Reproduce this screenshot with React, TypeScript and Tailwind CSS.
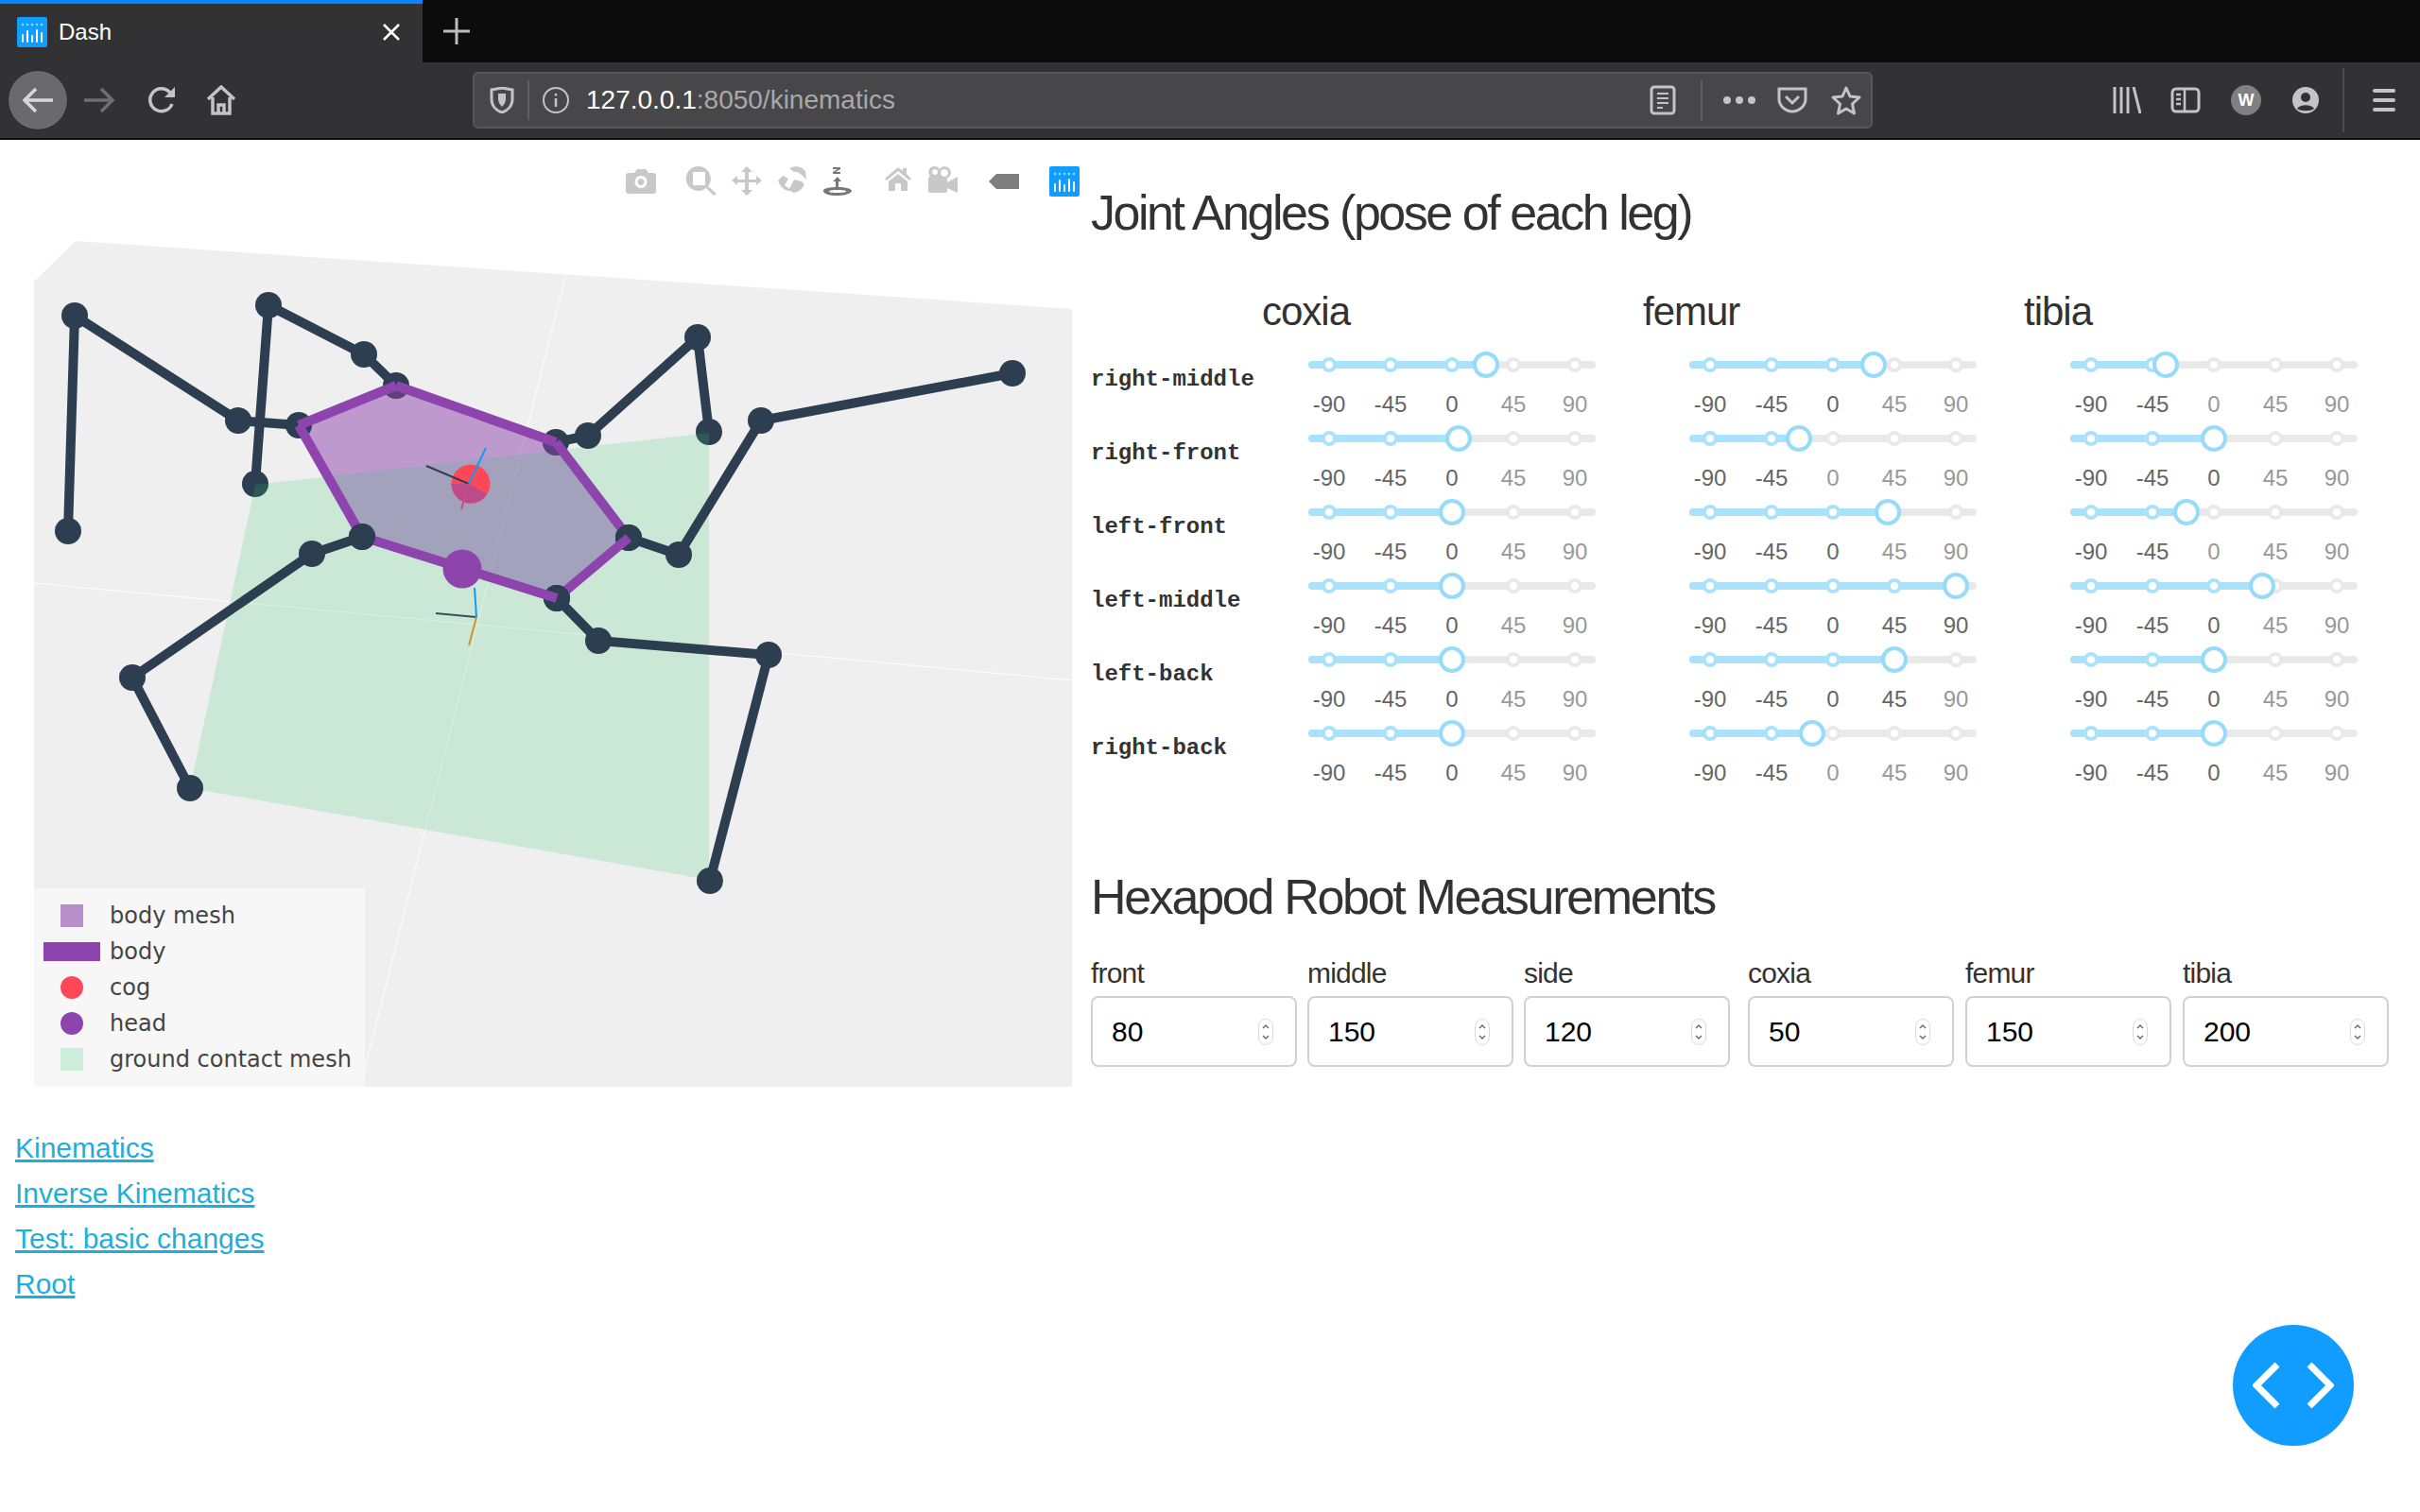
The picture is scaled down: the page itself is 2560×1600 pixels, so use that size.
import React from 'react';

const sans = { fontFamily: '"Liberation Sans", Arial, sans-serif' };

const rows = ['right-middle', 'right-front', 'left-front', 'left-middle', 'left-back', 'right-back'];
const angles = [
  [25, 30, -35],
  [5, -25, 0],
  [0, 40, -20],
  [0, 90, 35],
  [0, 45, 0],
  [0, -15, 0],
];
const marks = [-90, -45, 0, 45, 90];
const toX = (v: number) => 152 + (v * 65) / 45;

const Slider = ({ value }: { value: number }) => (
  <div className="relative w-[304px] h-[78px] shrink-0">
    <div className="absolute left-0 right-0 top-[15px] h-2 rounded-full bg-[#e9e9e9]" />
    <div className="absolute left-0 top-[15px] h-2 rounded-l-full bg-[#abe2fb]" style={{ width: toX(value) }} />
    {marks.map((m) => (
      <div
        key={m}
        className={`absolute top-[11px] w-4 h-4 -ml-2 rounded-full border-4 bg-white ${m <= value ? 'border-[#abe2fb]' : 'border-[#e9e9e9]'}`}
        style={{ left: toX(m) }}
      />
    ))}
    <div
      className="absolute top-[5px] w-[28px] h-[28px] -ml-[14px] rounded-full border-4 border-[#96dbfa] bg-white"
      style={{ left: toX(value) }}
    />
    {marks.map((m) => (
      <span
        key={m}
        className={`absolute top-[47px] w-[60px] -ml-[30px] text-center text-[24px] leading-[28px] ${m <= value ? 'text-[#666]' : 'text-[#999]'}`}
        style={{ left: toX(m) }}
      >
        {m}
      </span>
    ))}
  </div>
);

const NumberField = ({ label, value }: { label: string; value: number }) => (
  <div className="w-[218px]">
    <div className="text-[30px] leading-[40px] tracking-[-0.8px] text-[#333]">{label}</div>
    <div className="mt-1 flex items-center h-[75px] rounded-[8px] border-2 border-[#d1d1d1] bg-white pl-[20px] pr-[23px]">
      <span className="flex-1 text-[30px] text-black">{value}</span>
      <svg width="16" height="28" viewBox="0 0 16 28">
        <rect x="0.5" y="0.5" width="15" height="27" rx="7.5" fill="#fff" stroke="#dcdcdc" />
        <path d="M5 10l3-3 3 3M5 18l3 3 3-3" fill="none" stroke="#666" strokeWidth="1.3" />
      </svg>
    </div>
  </div>
);

// plotly / dash logo, also used as tab favicon
const DashLogo = ({ size }: { size: number }) => (
  <svg width={size} height={size} viewBox="0 0 32 32" className="shrink-0">
    <rect width="32" height="32" rx="2" fill="#119dff" />
    {[6, 11, 16, 21, 26].map((x) => (
      <circle key={x} cx={x} cy="8" r="1.3" fill="#7fe0ff" />
    ))}
    <path d="M6 19v7M11 15v11M16 20v6M21 14v12M26 17v9" stroke="#fff" strokeWidth="2" strokeLinecap="round" />
  </svg>
);

const Modebar = () => (
  <div className="absolute left-0 top-0 w-[1140px] h-[70px]">
    <svg width="1140" height="70" viewBox="0 148 1140 70">
      <g fill="#c8c8c8">
        <path fillRule="evenodd" d="M665 183h6l3-4h9l3 4h5a3 3 0 0 1 3 3v16a3 3 0 0 1-3 3h-26a3 3 0 0 1-3-3v-16a3 3 0 0 1 3-3zM678 186a6.5 6.5 0 1 0 .01 0zM678 189a3.5 3.5 0 1 1-.01 0z" />
        <path fillRule="evenodd" d="M739 176a13 13 0 0 1 10 21l9 8-3 2-8-8a13 13 0 1 1-8-23zM733 182v14h13v-14z" />
        <path d="M790 176l6 6h-4v8h8v-4l6 5-6 5v-3h-8v8h4l-6 6-6-6h4v-8h-8v3l-6-5 6-5v4h8v-8h-4z" />
        <path d="M835 178c6-3 13-2 17 3l1 9-5-5c-3-2-5-4-8-3zM823 191l5-5 6 3-4 7 8 6c-7 1-13-4-15-11zM840 190l8 2 3 3c-2 5-7 9-12 9l-4-4z" />
        <path d="M950 177l5 4v-3h4v6l5 5-2 2-12-10-12 10-2-2z" />
        <path d="M940 192l10-8 10 8v10h-7v-8h-6v8h-7z" />
        <path fillRule="evenodd" d="M989 176a6 6 0 0 1 5 3 6.500 6.500 0 1 1 4 10h4v4l11-6v17l-11-5v3a2 2 0 0 1-2 2h-16a2 2 0 0 1-2-2v-13a4 4 0 0 1 2-3 6 6 0 0 1 5-10zM989 179a3 3 0 1 0 .01 0zM999 179a4 4 0 1 0 .01 0z" />
      </g>
      <g fill="#777">
        <path d="M1046 192l8-8h24v16h-24z" fill="#7f7f7f" />
        <path d="M881 177h8v2l-5 3h5v2h-8v-2l5-3h-5z" />
        <path d="M886 187l4 5h-3v7h-3v-7h-3z" />
        <path fillRule="evenodd" d="M886 198c9 0 15 2 15 4s-6 5-15 5-15-2-15-5 6-4 15-4zM886 201c-5 0-9 .5-9 1.500s4 1.500 9 1.500 9-.5 9-1.500-4-1.500-9-1.500z" />
      </g>
    </svg>
    <div className="absolute left-[1110px] top-[28px]">
      <DashLogo size={32} />
    </div>
  </div>
);

const Node = ({ p }: { p: number[] }) => <circle cx={p[0]} cy={p[1]} r="14" fill="#2c3e50" />;

const legs = [
  [[316, 450], [252, 445], [79, 334], [72, 562]],
  [[419, 408], [385, 375], [284, 323], [270, 512]],
  [[383, 568], [330, 586], [140, 717], [201, 834]],
  [[588, 468], [622, 461], [738, 357], [750, 457]],
  [[665, 569], [718, 587], [805, 445], [1071, 395]],
  [[589, 633], [633, 678], [813, 693], [751, 932]],
];

const meshPoints = '316,450 419,408 588,468 665,569 589,633 383,568';
const groundPoints = '270,513 750,458 750,931 201,834';

const Plot = () => (
  <svg width="1140" height="1012" viewBox="0 148 1140 1012" className="block">
    <defs>
      <clipPath id="cog">
        <circle cx="498" cy="512" r="20.500" />
      </clipPath>
      <clipPath id="feet">
        <circle cx="270" cy="512" r="14" />
        <circle cx="750" cy="457" r="14" />
      </clipPath>
      <clipPath id="hips">
        <circle cx="419" cy="408" r="14" />
        <circle cx="588" cy="468" r="14" />
      </clipPath>
    </defs>
    <path d="M36 298L80 255 1134 327V1150H36z" fill="#efefef" />
    <path d="M599 290L381 1150M36 617L1134 720" stroke="#fff" strokeWidth="1" fill="none" />
    <polygon points={meshPoints} fill="#8e44ad" fillOpacity="0.5" />
    <polygon points={groundPoints} fill="#2ecc71" fillOpacity="0.19" />
    {legs.map((l, i) => (
      <g key={i}>
        <polyline points={l.map((p) => p.join(',')).join(' ')} fill="none" stroke="#2c3e50" strokeWidth="10" />
        {l.map((p, j) => (
          <Node key={j} p={p} />
        ))}
      </g>
    ))}
    {/* meshes tint the joints they pass over */}
    <polygon points={groundPoints} fill="#2ecc71" fillOpacity="0.19" clipPath="url(#feet)" />
    <polygon points={meshPoints} fill="#8e44ad" fillOpacity="0.5" clipPath="url(#hips)" />
    <circle cx="498" cy="512" r="20.500" fill="#ff4757" />
    <polygon points="496,512 530,531 530,550 470,550 470,512" fill="#bd4a8a" clipPath="url(#cog)" />
    <path d="M419 408L588 468" stroke="#8e44ad" strokeWidth="10" />
    <path d="M316 450L419 408" stroke="#8e44ad" strokeWidth="10" />
    <path d="M588 468L665 569" stroke="#8e44ad" strokeWidth="10" />
    <Node p={[665, 569]} />
    <path d="M665 569L589 633" stroke="#8e44ad" strokeWidth="10" />
    <path d="M316 450L383 568" stroke="#8e44ad" strokeWidth="10" />
    <Node p={[589, 633]} />
    <path d="M589 633L383 568" stroke="#8e44ad" strokeWidth="10" />
    <Node p={[383, 568]} />
    <circle cx="489" cy="602" r="20.500" fill="#8e44ad" />
    <path d="M451 493L496 512" stroke="#2c3e50" strokeWidth="2" />
    <path d="M514 474L496 512" stroke="#0f9bf0" strokeWidth="2" />
    <path d="M496 512L488 539" stroke="#c0527e" strokeWidth="2" />
    <path d="M461 649L504 653" stroke="#35505c" strokeWidth="2" />
    <path d="M502 622L504 653" stroke="#0f9bf0" strokeWidth="2" />
    <path d="M504 653L496 683" stroke="#c79632" strokeWidth="2" />
  </svg>
);

const legendItems = [
  { label: 'body mesh', sym: <div className="w-6 h-6 bg-[#b98fcb]" /> },
  { label: 'body', sym: <div className="w-[60px] h-5 bg-[#8e44ad]" /> },
  { label: 'cog', sym: <div className="w-6 h-6 rounded-full bg-[#ff4757]" /> },
  { label: 'head', sym: <div className="w-6 h-6 rounded-full bg-[#8e44ad]" /> },
  { label: 'ground contact mesh', sym: <div className="w-6 h-6 bg-[#cdeedb]" /> },
];

const Legend = () => (
  <div
    className="absolute left-[36px] top-[792px] w-[350px] h-[210px] bg-[#f7f7f7] pt-[10px] text-[#444] text-[24px]"
    style={{ fontFamily: '"DejaVu Sans", Verdana, sans-serif' }}
  >
    {legendItems.map((it) => (
      <div key={it.label} className="flex items-center h-[38px]">
        <div className="w-[80px] flex justify-center shrink-0">{it.sym}</div>
        <span className="whitespace-nowrap">{it.label}</span>
      </div>
    ))}
  </div>
);

const TabBar = () => (
  <div className="flex h-[66px] bg-[#0c0c0c]">
    <div className="w-[447px] h-full border-t-4 border-[#0a84ff] bg-[#323234] flex items-center pl-[18px] pr-[23px] pb-[2px]">
      <DashLogo size={32} />
      <span className="ml-3 flex-1 text-[24px] text-white">Dash</span>
      <svg width="20" height="20" viewBox="0 0 20 20">
        <path d="M2 2l16 16M18 2L2 18" stroke="#fff" strokeWidth="2.500" />
      </svg>
    </div>
    <div className="ml-[22px] flex items-center pb-[1px]">
      <svg width="28" height="28" viewBox="0 0 28 28">
        <path d="M14 0v28M0 14h28" stroke="#bdbdbf" strokeWidth="3" />
      </svg>
    </div>
  </div>
);

const stroke = '#c4c4c6';

const NavBar = () => (
  <div className="flex items-center h-[82px] bg-[#323234] border-b-2 border-[#0c0c0c] pb-0">
    <div className="ml-2 w-16 h-16 rounded-full bg-[#6a6a6c] border border-[#2a2a2c] flex items-center justify-center shrink-0">
      <svg width="32" height="28" viewBox="0 0 32 28">
        <path d="M14 2L2 14l12 12M2 14h30" fill="none" stroke="#d8d8da" strokeWidth="3.500" />
      </svg>
    </div>
    <svg width="32" height="28" viewBox="0 0 32 28" className="ml-[17px] shrink-0">
      <path d="M18 2l12 12-12 12M30 14H0" fill="none" stroke="#6f6f71" strokeWidth="3.500" />
    </svg>
    <svg width="32" height="30" viewBox="0 0 32 30" className="ml-[35px] shrink-0">
      <path d="M26 19a12 12 0 1 1-3-13l5 4" fill="none" stroke={stroke} strokeWidth="3.500" />
      <path d="M29 1v11H18z" fill={stroke} />
    </svg>
    <svg width="32" height="32" viewBox="0 0 32 32" className="ml-[30px] shrink-0">
      <path d="M2 15L16 2l14 13M7 13v17h18V13M13 30v-9h6v9" fill="none" stroke={stroke} strokeWidth="3.500" />
    </svg>
    <div className="ml-[250px] w-[1481px] h-[60px] rounded-[6px] bg-[#474749] border-2 border-[#58585a] flex items-center pl-4 pr-[10px] shrink-0">
      <svg width="26" height="28" viewBox="0 0 26 28" className="shrink-0">
        <path d="M2 3l11-2 11 2v10c0 7-5 12-11 14C7 25 2 20 2 13z" fill="none" stroke={stroke} strokeWidth="3" />
        <path d="M9 7h8v6c0 3-2 6-4 8-2-2-4-5-4-8z" fill={stroke} />
      </svg>
      <div className="ml-[14px] w-[2px] h-[42px] bg-[#5f6064] shrink-0" />
      <svg width="30" height="30" viewBox="0 0 30 30" className="ml-[13px] shrink-0">
        <circle cx="15" cy="15" r="13" fill="none" stroke={stroke} strokeWidth="2" />
        <path d="M15 13v9M15 8v2.500" stroke={stroke} strokeWidth="2.500" />
      </svg>
      <span className="ml-[17px] text-[28px] whitespace-nowrap text-white">
        127.0.0.1<span className="text-[#a9a9ab]">:8050/kinematics</span>
      </span>
      <div className="flex-1" />
      <svg width="28" height="32" viewBox="0 0 28 32" className="shrink-0">
        <rect x="2" y="2" width="24" height="28" rx="3" fill="none" stroke={stroke} strokeWidth="3" />
        <path d="M8 9h12M8 14h12M8 19h12M8 24h6" stroke={stroke} strokeWidth="2" />
      </svg>
      <div className="ml-[26px] w-[2px] h-[42px] bg-[#5f6064] shrink-0" />
      <svg width="34" height="8" viewBox="0 0 34 8" className="ml-[22px] shrink-0">
        <circle cx="4" cy="4" r="4" fill={stroke} />
        <circle cx="17" cy="4" r="4" fill={stroke} />
        <circle cx="30" cy="4" r="4" fill={stroke} />
      </svg>
      <svg width="32" height="28" viewBox="0 0 32 28" className="ml-[23px] shrink-0">
        <path d="M2 2h28v11c0 7-7 13-14 13S2 20 2 13z" fill="none" stroke={stroke} strokeWidth="3" />
        <path d="M9 10l7 7 7-7" fill="none" stroke={stroke} strokeWidth="3" />
      </svg>
      <svg width="32" height="32" viewBox="0 0 32 32" className="ml-[25px] shrink-0">
        <path d="M16 3l4 9 10 1-7.500 7 2 10-8.500-5-8.500 5 2-10L2 13l10-1z" fill="none" stroke={stroke} strokeWidth="3" strokeLinejoin="round" />
      </svg>
    </div>
    <svg width="30" height="28" viewBox="0 0 30 28" className="ml-[254px] shrink-0">
      <path d="M2 0v28M9 0v28M16 0v28M22 0l7 28" stroke={stroke} strokeWidth="3" />
    </svg>
    <svg width="32" height="28" viewBox="0 0 32 28" className="ml-[31px] shrink-0">
      <rect x="2" y="2" width="28" height="24" rx="4" fill="none" stroke={stroke} strokeWidth="3" />
      <path d="M15 2v24M6 8h5M6 13h5M6 18h5" stroke={stroke} strokeWidth="2.500" />
    </svg>
    <div
      className="ml-[32px] w-8 h-8 rounded-full bg-[#808082] flex items-center justify-center text-white text-[18px] font-bold shrink-0"
      style={sans}
    >
      W
    </div>
    <svg width="30" height="30" viewBox="0 0 30 30" className="ml-[32px] shrink-0">
      <circle cx="15" cy="15" r="14" fill={stroke} />
      <circle cx="15" cy="12" r="5" fill="#323234" />
      <path d="M6 24c3-5 15-5 18 0-4 3-14 3-18 0z" fill="#323234" />
    </svg>
    <div className="ml-[24px] w-[2px] h-[68px] bg-[#4d4d4f] shrink-0" />
    <svg width="24" height="24" viewBox="0 0 24 24" className="ml-[30px] shrink-0">
      <path d="M2 2h20M2 12h20M2 22h20" stroke={stroke} strokeWidth="4" strokeLinecap="round" />
    </svg>
  </div>
);

const App = () => (
  <div className="relative w-[2560px] h-[1600px] overflow-hidden bg-white" style={sans}>
    <TabBar />
    <NavBar />
    <div className="flex">
      <div className="w-[1140px] shrink-0">
        <div className="relative h-[1012px]">
          <Plot />
          <Modebar />
          <Legend />
        </div>
        <div className="mt-[31px] pl-4 flex flex-col items-start text-[30px] leading-[48px] text-[#1eaedb]">
          <a className="underline" href="#">Kinematics</a>
          <a className="underline" href="#">Inverse Kinematics</a>
          <a className="underline" href="#">Test: basic changes</a>
          <a className="underline" href="#">Root</a>
        </div>
      </div>

      <div className="pl-[14px] pt-[47px] text-[#323232]">
        <h3 className="text-[52px] leading-[60px] tracking-[-2.45px] font-normal">Joint Angles (pose of each leg)</h3>

        <div className="mt-[50px] flex gap-x-[99px] pl-[181px]">
          <h5 className="w-[304px] text-[42px] leading-[50px] tracking-[-1px]">coxia</h5>
          <h5 className="w-[304px] text-[42px] leading-[50px] tracking-[-1px]">femur</h5>
          <h5 className="w-[304px] text-[42px] leading-[50px] tracking-[-1px]">tibia</h5>
        </div>

        <div className="mt-3">
          {rows.map((name, i) => (
            <div key={name} className="flex h-[78px]">
              <div
                className="w-[230px] shrink-0 pt-[21px] text-[24px] leading-[28px] font-bold text-[#333]"
                style={{ fontFamily: '"Liberation Mono", "Courier New", monospace' }}
              >
                {name}
              </div>
              <div className="flex gap-x-[99px]">
                {angles[i].map((v, j) => (
                  <Slider key={j} value={v} />
                ))}
              </div>
            </div>
          ))}
        </div>

        <h3 className="mt-[84px] text-[52px] leading-[60px] tracking-[-2.3px] font-normal">Hexapod Robot Measurements</h3>

        <div className="mt-[31px] flex">
          <div className="flex gap-[11px]">
            <NumberField label="front" value={80} />
            <NumberField label="middle" value={150} />
            <NumberField label="side" value={120} />
          </div>
          <div className="ml-[19px] flex gap-[12px]">
            <NumberField label="coxia" value={50} />
            <NumberField label="femur" value={150} />
            <NumberField label="tibia" value={200} />
          </div>
        </div>
      </div>
    </div>

    <div className="absolute left-[2362px] top-[1402px] w-32 h-32 rounded-full bg-[#119dff] flex items-center justify-center">
      <svg width="86" height="50" viewBox="0 0 86 50">
        <path d="M26 3L4 25l22 22M60 3l22 22-22 22" fill="none" stroke="#fff" strokeWidth="7" />
      </svg>
    </div>
  </div>
);

export default App;
